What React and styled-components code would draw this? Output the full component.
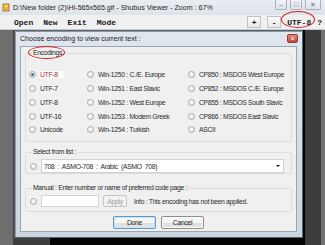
import styled, { createGlobalStyle } from 'styled-components';

const GlobalStyle = createGlobalStyle`
  * { box-sizing: border-box; }
  body {
    margin: 0;
    font-family: "Liberation Sans", Arial, sans-serif;
  }
`;

const leftCol = [
  { label: 'UTF-8', checked: true },
  { label: 'UTF-7' },
  { label: 'UTF-8' },
  { label: 'UTF-16' },
  { label: 'Unicode' },
];
const midCol = [
  'Win-1250 :  C./E. Europe',
  'Win-1251 : East Slavic',
  'Win-1252 : West Europe',
  'Win-1253 :  Modern Greek',
  'Win-1254 :  Turkish',
];
const rightCol = [
  'CP850 : MSDOS West Europe',
  'CP852 : MSDOS C./E.  Europe',
  'CP855 : MSDOS South Slavic',
  'CP866 : MSDOS East Slavic',
  'ASCII',
];

const Window = styled.div`
  width: 325px;
  height: 245px;
  overflow: hidden;
  display: flex;
  flex-direction: column;
  position: relative;
  background: #6d6d6d;
`;

const TitleBar = styled.div`
  height: 15px;
  flex: none;
  display: flex;
  align-items: center;
  gap: 3px;
  padding-left: 2px;
  background: linear-gradient(#e9edf2, #dde3ea);
  font-size: 7.1px;
  color: #1b1b1b;
  white-space: nowrap;
`;

const TitleText = styled.span`
  text-shadow: 0 0 4px rgba(255, 255, 255, 0.9);
`;

const WindowControls = styled.div`
  margin-left: auto;
  display: flex;
  align-items: flex-start;
  gap: 3px;
  height: 100%;
  padding-right: 4px;
`;

const ControlButton = styled.div`
  width: ${(p) => p.$w}px;
  height: 10px;
  border: 1px solid #a9b2bc;
  border-top: none;
  border-radius: 0 0 2px 2px;
  background: linear-gradient(#f1f3f6, #dfe3e8);
  display: flex;
  align-items: center;
  justify-content: center;
  color: #6a7682;
  font-size: 7px;
`;

const MenuBar = styled.div`
  height: 15px;
  flex: none;
  display: flex;
  align-items: center;
  padding-left: 14px;
  gap: 10px;
  background: #f0f0f0;
  border-bottom: 1px solid #c9c9c9;
  font-family: "Liberation Mono", "Courier New", monospace;
  font-weight: bold;
  font-size: 8px;
  color: #1a1a1a;
`;

const MenuTools = styled.div`
  margin-left: auto;
  display: flex;
  align-items: center;
  gap: 6px;
  padding-right: 3px;
`;

const ToolButton = styled.div`
  width: 14px;
  height: 12px;
  border: 1px solid #c3c3c3;
  background: linear-gradient(#fbfbfb, #e9e9e9);
  display: flex;
  align-items: center;
  justify-content: center;
`;

const Encoding = styled.span`
  position: relative;
`;

const RedEllipse = styled.span`
  position: absolute;
  left: ${(p) => p.$l}px;
  top: ${(p) => p.$t}px;
  width: ${(p) => p.$w}px;
  height: ${(p) => p.$h}px;
  border: 1.5px solid #d0202c;
  border-radius: 50%;
  pointer-events: none;
`;

const Workspace = styled.div`
  flex: 1;
  position: relative;
  display: flex;
`;

const LeftGutter = styled.div`
  width: 13px;
  background: #6e6e6e;
`;

const Viewport = styled.div`
  flex: 1;
  background: #3d3d3d;
  padding-left: 37px;
`;

const ImageArea = styled.div`
  width: 255px;
  height: 100%;
  background: #050505;
`;

const RightGutter = styled.div`
  width: 4px;
  background: #717171;
`;

const Dialog = styled.div`
  position: absolute;
  left: 14px;
  top: 0;
  width: 289px;
  height: 208px;
  border: 1px solid #59636e;
  background: linear-gradient(#dfe6ee, #cbd5df);
  padding: 0 5px 5px;
  display: flex;
  flex-direction: column;
  box-shadow: 1px 1px 0 #8b96a1 inset;
`;

const DialogTitle = styled.div`
  height: 15px;
  flex: none;
  display: flex;
  align-items: center;
  justify-content: space-between;
  font-size: 7.1px;
  color: #222;
`;

const CloseButton = styled.div`
  width: 11px;
  height: 9px;
  margin-right: -1px;
  border-radius: 2px;
  border: 1px solid #8f3a34;
  background: linear-gradient(#e08a80, #c2493d);
  display: flex;
  align-items: center;
  justify-content: center;
  color: #fff;
  font-size: 7px;
  line-height: 1;
`;

const DialogBody = styled.div`
  flex: 1;
  background: #f0f0f0;
  border: 1px solid #9aa6b2;
  padding: 0 4px;
  display: flex;
  flex-direction: column;
  font-size: 6.8px;
  letter-spacing: -0.3px;
  color: #2a2a2a;
`;

const Group = styled.fieldset`
  margin: 0;
  padding: 0;
  border: 1px solid #dcdcdc;
  border-radius: 2px;
  min-width: 0;
  height: ${(p) => p.$h}px;
  margin-top: ${(p) => p.$mt}px;
`;

const Legend = styled.legend`
  padding: 0 1px;
  margin-left: 6px;
  line-height: 8px;
  position: relative;
  white-space: nowrap;
`;

const RadioGrid = styled.div`
  display: grid;
  grid-template-columns: 58px 101px 1fr;
  grid-auto-flow: column;
  grid-template-rows: repeat(5, 13.75px);
  padding: 11px 0 0 3px;
`;

const RadioRow = styled.label`
  display: flex;
  align-items: center;
  gap: 3px;
  white-space: nowrap;
`;

const Radio = styled.span`
  flex: none;
  width: 7px;
  height: 7px;
  border-radius: 50%;
  border: 1px solid #a8a8a8;
  background: radial-gradient(circle at 40% 35%, #ffffff, #dcdcdc);
  display: flex;
  align-items: center;
  justify-content: center;
  &::after {
    content: '';
    display: ${(p) => (p.$checked ? 'block' : 'none')};
    width: 3px;
    height: 3px;
    border-radius: 50%;
    background: #2d6ea8;
  }
`;

const RadioText = styled.span`
  padding: 0 1px;
  background: ${(p) => (p.$checked ? '#fff' : 'transparent')};
  color: ${(p) => (p.$checked ? '#b02a34' : 'inherit')};
  ${(p) => (p.$checked ? 'padding-right: 6px;' : '')}
`;

const GroupRow = styled.div`
  display: flex;
  align-items: center;
  gap: 4px;
  padding: 3px 0 0 4px;
  white-space: nowrap;
`;

const Dropdown = styled.div`
  width: 243px;
  height: 14px;
  background: #fff;
  border: 1px solid #d2d2d2;
  display: flex;
  align-items: center;
  justify-content: space-between;
  padding: 0 3px 0 2px;
  word-spacing: 1.5px;
`;

const Caret = styled.span`
  width: 0;
  height: 0;
  border-left: 2px solid transparent;
  border-right: 2px solid transparent;
  border-top: 2px solid #111;
`;

const TextInput = styled.div`
  width: 58px;
  height: 12px;
  background: #fff;
  border: 1px solid #d4d4d4;
`;

const SmallButton = styled.div`
  width: 24px;
  height: 12px;
  border: 1px solid #c6c6c6;
  border-radius: 2px;
  background: #f2f2f2;
  color: #a0a0a0;
  display: flex;
  align-items: center;
  justify-content: center;
`;

const InfoText = styled.span`
  margin-left: 3px;
`;

const ButtonRow = styled.div`
  display: flex;
  justify-content: center;
  gap: 5px;
  margin-top: 4px;
`;

const DialogButton = styled.div`
  width: 43px;
  height: 13px;
  border: 1px solid ${(p) => (p.$focus ? '#5f97c8' : '#8e8e8e')};
  border-radius: 2px;
  background: linear-gradient(#f6f6f6 50%, #dcdcdc 50%, #e6e6e6);
  box-shadow: inset 0 0 0 1px ${(p) => (p.$focus ? '#c8e4f8' : '#fafafa')};
  display: flex;
  align-items: center;
  justify-content: center;
  color: #222;
`;

const AppIcon = () => (
  <svg width="8" height="9" viewBox="0 0 8 9">
    <rect x="1" y="1" width="6" height="7" fill="#e3b33a" stroke="#a0701a" strokeWidth="0.8" />
    <rect x="2.3" y="2.5" width="3.4" height="1" fill="#fff6d0" />
  </svg>
);

export default function App() {
  return (
    <>
      <GlobalStyle />
      <Window>
        <TitleBar>
          <AppIcon />
          <TitleText>D:\New folder (2)\Hi-565x565.gif - Shubus Viewer - Zoom : 67%</TitleText>
          <WindowControls>
            <ControlButton $w={12}>–</ControlButton>
            <ControlButton $w={12}>□</ControlButton>
            <ControlButton $w={16}>✕</ControlButton>
          </WindowControls>
        </TitleBar>
        <MenuBar>
          <span>Open</span>
          <span>New</span>
          <span>Exit</span>
          <span>Mode</span>
          <MenuTools>
            <ToolButton>+</ToolButton>
            <ToolButton>-</ToolButton>
            <Encoding>
              UTF-8
              <RedEllipse $l={-6} $t={-7} $w={34} $h={17} />
            </Encoding>
            <span>?</span>
          </MenuTools>
        </MenuBar>
        <Workspace>
          <LeftGutter />
          <Viewport>
            <ImageArea />
          </Viewport>
          <RightGutter />
          <Dialog>
            <DialogTitle>
              Choose encoding to view current text :
              <CloseButton>×</CloseButton>
            </DialogTitle>
            <DialogBody>
              <Group $h={93} $mt={2}>
                <Legend>
                  Encodings
                  <RedEllipse $l={-4} $t={-3} $w={37} $h={13} />
                </Legend>
                <RadioGrid>
                  {leftCol.map((r, i) => (
                    <RadioRow key={'l' + i}>
                      <Radio $checked={r.checked} />
                      <RadioText $checked={r.checked}>{r.label}</RadioText>
                    </RadioRow>
                  ))}
                  {midCol.map((t) => (
                    <RadioRow key={t}>
                      <Radio />
                      <RadioText>{t}</RadioText>
                    </RadioRow>
                  ))}
                  {rightCol.map((t) => (
                    <RadioRow key={t}>
                      <Radio />
                      <RadioText>{t}</RadioText>
                    </RadioRow>
                  ))}
                </RadioGrid>
              </Group>
              <Group $h={26} $mt={6}>
                <Legend>Select from list :</Legend>
                <GroupRow>
                  <Radio />
                  <Dropdown>
                    <span>708 : ASMO-708 : Arabic (ASMO 708)</span>
                    <Caret />
                  </Dropdown>
                </GroupRow>
              </Group>
              <Group $h={28} $mt={10}>
                <Legend>Manual :  Enter number or name of preferred code page :</Legend>
                <GroupRow>
                  <Radio />
                  <TextInput />
                  <SmallButton>Apply</SmallButton>
                  <InfoText>Info : This encoding has not been applied.</InfoText>
                </GroupRow>
              </Group>
              <ButtonRow>
                <DialogButton $focus>Done</DialogButton>
                <DialogButton>Cancel</DialogButton>
              </ButtonRow>
            </DialogBody>
          </Dialog>
        </Workspace>
      </Window>
    </>
  );
}
